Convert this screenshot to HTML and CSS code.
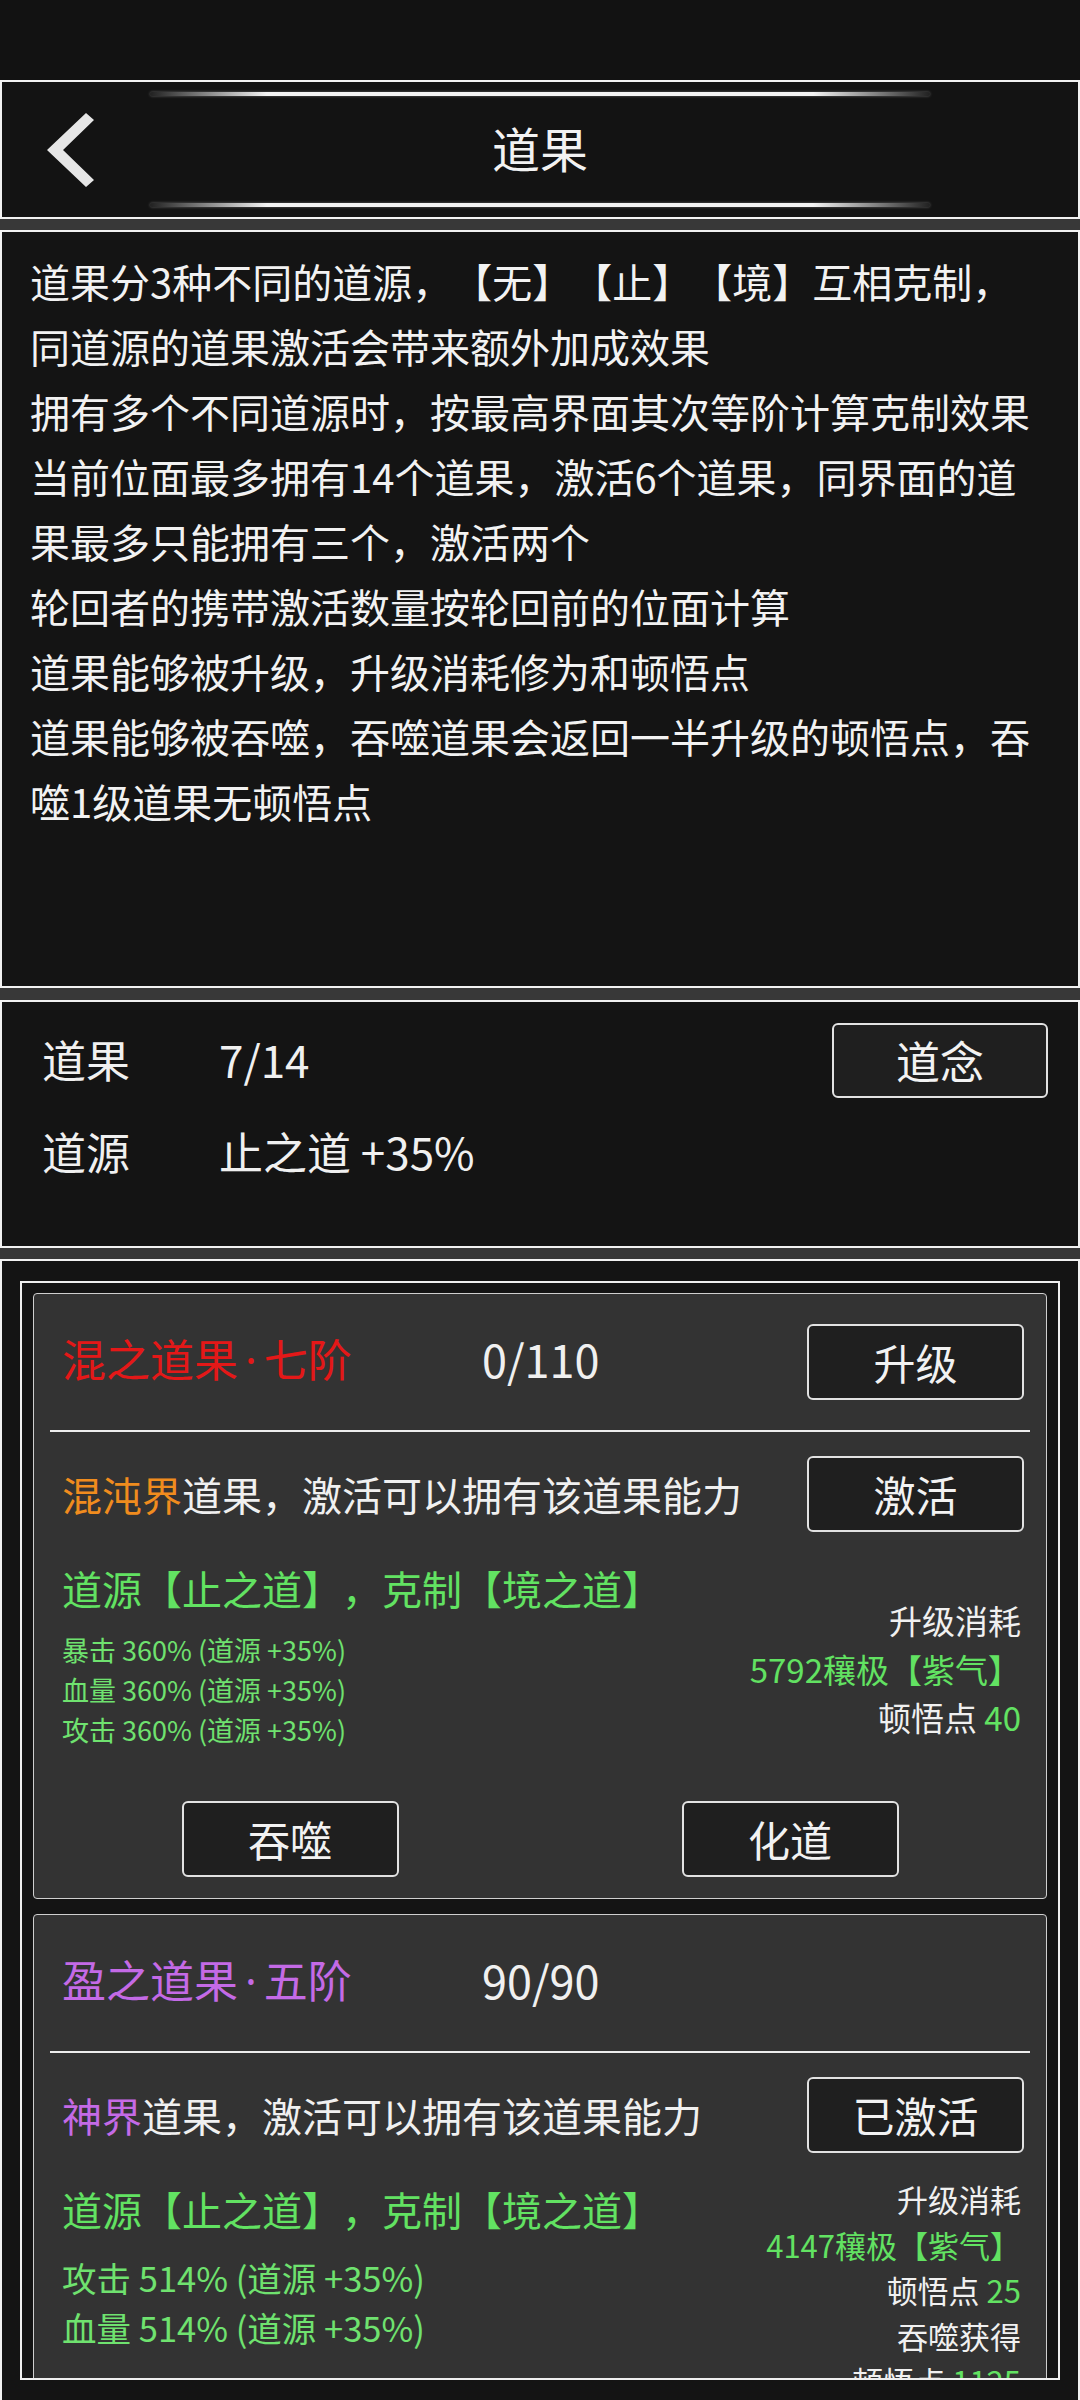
FILE: index.html
```html
<!DOCTYPE html>
<html lang="zh-CN">
<head>
<meta charset="utf-8">
<title>道果</title>
<link rel="stylesheet" href="styles.css">
</head>
<body>
<div class="status"></div>

<header class="panel header">
  <div class="glow"></div>
  <div class="header-row">
    <div class="back">
      <svg width="100" height="107" viewBox="0 0 100 107"><polygon points="84,17 92,24 61,54 92,84 84,91 45,54" fill="#e6e6e6"/></svg>
    </div>
    <h1 class="title">道果</h1>
    <div></div>
  </div>
  <div class="glow"></div>
</header>

<section class="panel desc">
  <p class="desc-text">道果分3种不同的道源，【无】【止】【境】互相克制，<br>同道源的道果激活会带来额外加成效果<br>拥有多个不同道源时，按最高界面其次等阶计算克制效果<br>当前位面最多拥有14个道果，激活6个道果，同界面的道<br>果最多只能拥有三个，激活两个<br>轮回者的携带激活数量按轮回前的位面计算<br>道果能够被升级，升级消耗修为和顿悟点<br>道果能够被吞噬，吞噬道果会返回一半升级的顿悟点，吞<br>噬1级道果无顿悟点</p>
</section>

<section class="panel stats">
  <div class="stats-row">
    <span class="label">道果</span>
    <span class="value">7/14</span>
    <button class="btn btn-wide">道念</button>
  </div>
  <div class="stats-row">
    <span class="label">道源</span>
    <span class="value">止之道 +35%</span>
  </div>
</section>

<section class="panel list">
  <div class="frame">
    <article class="card">
      <div class="card-head">
        <span class="card-title red">混之道果<span class="dot">·</span>七阶</span>
        <span class="card-count">0/110</span>
        <button class="btn">升级</button>
      </div>
      <div class="divider"></div>
      <div class="card-realm">
        <span class="realm-text"><span class="orange">混沌界</span>道果，激活可以拥有该道果能力</span>
        <button class="btn">激活</button>
      </div>
      <div class="card-body">
        <div class="effects">
          <div class="source">道源【止之道】，克制【境之道】</div>
          <ul class="attr attr-sm">
            <li>暴击 360% (道源 +35%)</li>
            <li>血量 360% (道源 +35%)</li>
            <li>攻击 360% (道源 +35%)</li>
          </ul>
        </div>
        <div class="cost cost-a">
          <div>升级消耗</div>
          <div class="green">5792穰极【紫气】</div>
          <div>顿悟点 <span class="green">40</span></div>
        </div>
      </div>
      <div class="card-actions">
        <div class="action-cell"><button class="btn">吞噬</button></div>
        <div class="action-cell"><button class="btn">化道</button></div>
      </div>
    </article>

    <article class="card">
      <div class="card-head">
        <span class="card-title purple">盈之道果<span class="dot">·</span>五阶</span>
        <span class="card-count">90/90</span>
      </div>
      <div class="divider"></div>
      <div class="card-realm">
        <span class="realm-text"><span class="purple">神界</span>道果，激活可以拥有该道果能力</span>
        <button class="btn">已激活</button>
      </div>
      <div class="card-body">
        <div class="effects">
          <div class="source">道源【止之道】，克制【境之道】</div>
          <ul class="attr attr-lg">
            <li>攻击 514% (道源 +35%)</li>
            <li>血量 514% (道源 +35%)</li>
          </ul>
        </div>
        <div class="cost cost-b">
          <div>升级消耗</div>
          <div class="green">4147穰极【紫气】</div>
          <div>顿悟点 <span class="green">25</span></div>
          <div>吞噬获得</div>
          <div>顿悟点 <span class="green">1125</span></div>
        </div>
      </div>
    </article>
  </div>
</section>
</body>
</html>
```

FILE: styles.css
```css
* { box-sizing: border-box; }

html, body {
  margin: 0;
  padding: 0;
}

body {
  width: 1080px;
  height: 2400px;
  overflow: hidden;
  background: #383838;
  color: #f0f0f0;
  font-family: "Noto Sans CJK SC", "Noto Sans", sans-serif;
  text-spacing-trim: space-all;
  font-feature-settings: "halt" 0, "chws" 0;
}

.status {
  height: 80px;
  background: #121212;
}

.panel {
  border: 2px solid #f2f2f2;
  background: #141414;
}

/* header */
.header {
  height: 139px;
  margin-bottom: 11px;
  padding: 10px 0;
  display: flex;
  flex-direction: column;
  background: #131313;
}

.glow {
  width: 780px;
  height: 4px;
  margin: 0 auto;
  border-radius: 2px;
  background: linear-gradient(90deg, rgba(255,255,255,0.06), #f4f4f4 15%, #f4f4f4 85%, rgba(255,255,255,0.06));
  box-shadow: 0 0 3px rgba(255,255,255,0.35);
}

.header-row {
  height: 107px;
  display: grid;
  grid-template-columns: 1fr auto 1fr;
  align-items: center;
}

.back {
  height: 107px;
}

.back svg { display: block; }

.title {
  margin: 0 0 6px;
  font-size: 48px;
  font-weight: 400;
  line-height: 1;
  color: #f2f2f2;
}

/* description */
.desc {
  height: 758px;
  margin-bottom: 12px;
  padding: 17px 0 0 28px;
}

.desc-text {
  margin: 0;
  font-size: 40px;
  line-height: 65px;
  white-space: nowrap;
  color: #f2f2f2;
}

/* stats */
.stats {
  height: 248px;
  margin-bottom: 11px;
  padding: 18px 30px 0 40px;
  display: flex;
  flex-direction: column;
  gap: 12px;
}

.stats-row {
  height: 80px;
  display: grid;
  grid-template-columns: 177px 1fr auto;
  align-items: center;
  font-size: 44px;
}

.stats-row .label,
.stats-row .value {
  margin-bottom: 2px;
}

/* buttons */
.btn {
  width: 217px;
  height: 76px;
  padding: 0;
  border: 2px solid #e2e2e2;
  border-radius: 6px;
  background: #1f1f1f;
  color: #f2f2f2;
  font-family: "Noto Sans CJK SC", "Noto Sans", sans-serif;
  font-size: 42px;
  line-height: 1;
}

.btn-wide {
  width: 216px;
  height: 75px;
  font-size: 44px;
}

/* list */
.list {
  height: 1141px;
  border-bottom-width: 0;
  padding: 20px 18px 0;
}

.frame {
  height: 1099px;
  border: 2px solid #efefef;
  padding: 10px 11px 0;
  overflow: hidden;
  display: flex;
  flex-direction: column;
  gap: 15px;
}

.card {
  flex-shrink: 0;
  border: 1px solid #cfcfcf;
  border-radius: 4px;
  background: #333333;
  padding: 0 22px 0 28px;
}

.card-head {
  height: 136px;
  display: flex;
  align-items: center;
}

.card-title {
  width: 420px;
  font-size: 44px;
  margin-bottom: 8px;
  white-space: nowrap;
}

.dot {
  font-family: "Noto Sans", sans-serif;
  margin: 0 7px;
}

.card-count {
  flex: 1;
  font-size: 45px;
  margin-bottom: 8px;
}

.divider {
  height: 2px;
  margin: 0 -6px 0 -12px;
  background: #ededed;
}

.card-realm {
  height: 124px;
  display: flex;
  align-items: center;
  justify-content: space-between;
}

.realm-text {
  font-size: 40px;
  white-space: nowrap;
}

.card-body {
  display: flex;
  justify-content: space-between;
  align-items: flex-start;
}

.source {
  line-height: 64px;
  font-size: 40px;
  color: #62e262;
  white-space: nowrap;
}

.attr {
  list-style: none;
  margin: 0;
  padding: 0;
  color: #6fe26f;
  white-space: nowrap;
}

.attr-sm {
  margin-top: 10px;
  font-size: 27px;
  line-height: 40px;
}

.attr-lg {
  margin-top: 11px;
  font-size: 34.5px;
  line-height: 50px;
}

.cost {
  text-align: right;
  margin-right: 3px;
  white-space: nowrap;
}

.cost-a {
  padding-top: 40px;
  font-size: 33px;
  line-height: 48.5px;
}

.cost-b {
  margin-top: -1px;
  font-size: 31px;
  line-height: 45.5px;
}

.card-actions {
  margin: 51px -22px 0 -28px;
  padding: 0 6px 21px;
  display: grid;
  grid-template-columns: 1fr 1fr;
}

.action-cell {
  display: flex;
  justify-content: center;
}

.red { color: #e41818; }
.orange { color: #f08c1e; }
.purple { color: #c46ae6; }
.green { color: #62e262; }
```
